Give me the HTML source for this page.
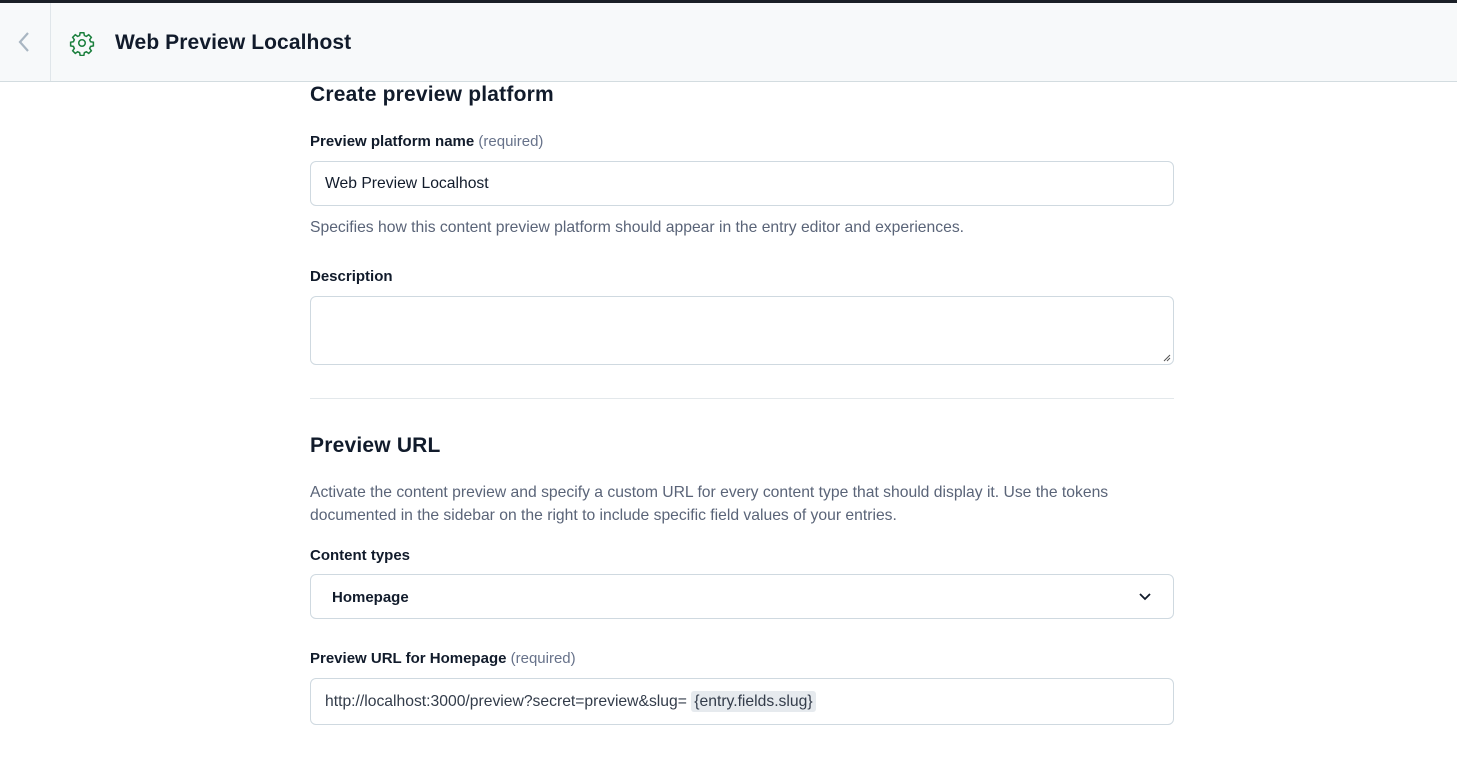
<!DOCTYPE html>
<html><head><style>
*{box-sizing:border-box;margin:0;padding:0}
body{width:1457px;height:777px;overflow:hidden;background:#fff;font-family:"Liberation Sans",sans-serif;color:#111b2b;position:relative}
.top{position:absolute;left:0;top:0;width:1457px;height:3px;background:#1a1f27}
.hdr{position:absolute;left:0;top:3px;width:1457px;height:79px;background:#f7f9fa;border-bottom:1px solid #d3dce0}
.back{position:absolute;left:0;top:0;width:51px;height:78px;border-right:1px solid #e0e6ea}
.title{position:absolute;left:115px;top:28px;font-size:21px;font-weight:bold;color:#111b2b;letter-spacing:.1px}
.a{position:absolute}
.lbl{font-size:15px;font-weight:bold;color:#111b2b}
.req{font-weight:normal;color:#67728a}
.inp{position:absolute;left:310px;width:864px;border:1px solid #cfd9e0;border-radius:6px;background:#fff}
.help{font-size:15.7px;color:#5a6478;line-height:23px}
h2{font-size:21px;font-weight:bold;color:#111b2b;letter-spacing:.2px}
.t{font-size:15.7px;color:#111b2b}
</style></head><body>
<div class="top"></div>
<div class="hdr">
 <div class="back"><svg width="51" height="78"><path d="M28 30 L20 39 L28 48" stroke="#a9b6c2" stroke-width="2.2" fill="none"/></svg></div>
 <svg class="a" style="left:69px;top:27px" width="26" height="26" viewBox="0 0 24 24" fill="none" stroke="#1a7f3c" stroke-width="1.4"><circle cx="12" cy="12" r="3"/><path d="M10.3 2.5h3.4l.5 2.6 1.8.8 2.2-1.5 2.4 2.4-1.5 2.2.8 1.8 2.6.5v3.4l-2.6.5-.8 1.8 1.5 2.2-2.4 2.4-2.2-1.5-1.8.8-.5 2.6h-3.4l-.5-2.6-1.8-.8-2.2 1.5-2.4-2.4 1.5-2.2-.8-1.8-2.6-.5v-3.4l2.6-.5.8-1.8-1.5-2.2 2.4-2.4 2.2 1.5 1.8-.8z"/></svg>
 <div class="title">Web Preview Localhost</div>
</div>
<h2 class="a" style="left:310px;top:83px">Create preview platform</h2>
<div class="a lbl" style="left:310px;top:133px">Preview platform name <span class="req">(required)</span></div>
<div class="inp" style="top:161px;height:45px"><div class="t" style="position:absolute;left:14px;top:13px">Web Preview Localhost</div></div>
<div class="a help" style="left:310px;top:216px">Specifies how this content preview platform should appear in the entry editor and experiences.</div>
<div class="a lbl" style="left:310px;top:268px">Description</div>
<div class="inp" style="top:296px;height:69px"><svg style="position:absolute;right:2px;bottom:2px" width="10" height="10"><path d="M9 3L3 9M9 6L6 9" stroke="#555" stroke-width="1"/></svg></div>
<div class="a" style="left:310px;top:398px;width:864px;height:1px;background:#e3e8eb"></div>
<h2 class="a" style="left:310px;top:434px">Preview URL</h2>
<div class="a help" style="left:310px;top:481px;width:830px">Activate the content preview and specify a custom URL for every content type that should display it. Use the tokens<br>documented in the sidebar on the right to include specific field values of your entries.</div>
<div class="a lbl" style="left:310px;top:547px">Content types</div>
<div class="inp" style="top:574px;height:45px"><div class="t" style="position:absolute;left:21px;top:14px;font-weight:bold;font-size:15px">Homepage</div>
<svg style="position:absolute;left:827px;top:16px" width="14" height="12"><path d="M2 3l5 5 5-5" stroke="#111b2b" stroke-width="1.8" fill="none"/></svg></div>
<div class="a lbl" style="left:310px;top:650px">Preview URL for Homepage <span class="req">(required)</span></div>
<div class="inp" style="top:678px;height:47px"><div class="t" style="position:absolute;left:14px;top:14px;color:#333c4a">http://localhost:3000/preview?secret=preview&amp;slug= <span style="background:#e6eaee;padding:2px 3px;border-radius:3px">{entry.fields.slug}</span></div></div>
</body></html>
